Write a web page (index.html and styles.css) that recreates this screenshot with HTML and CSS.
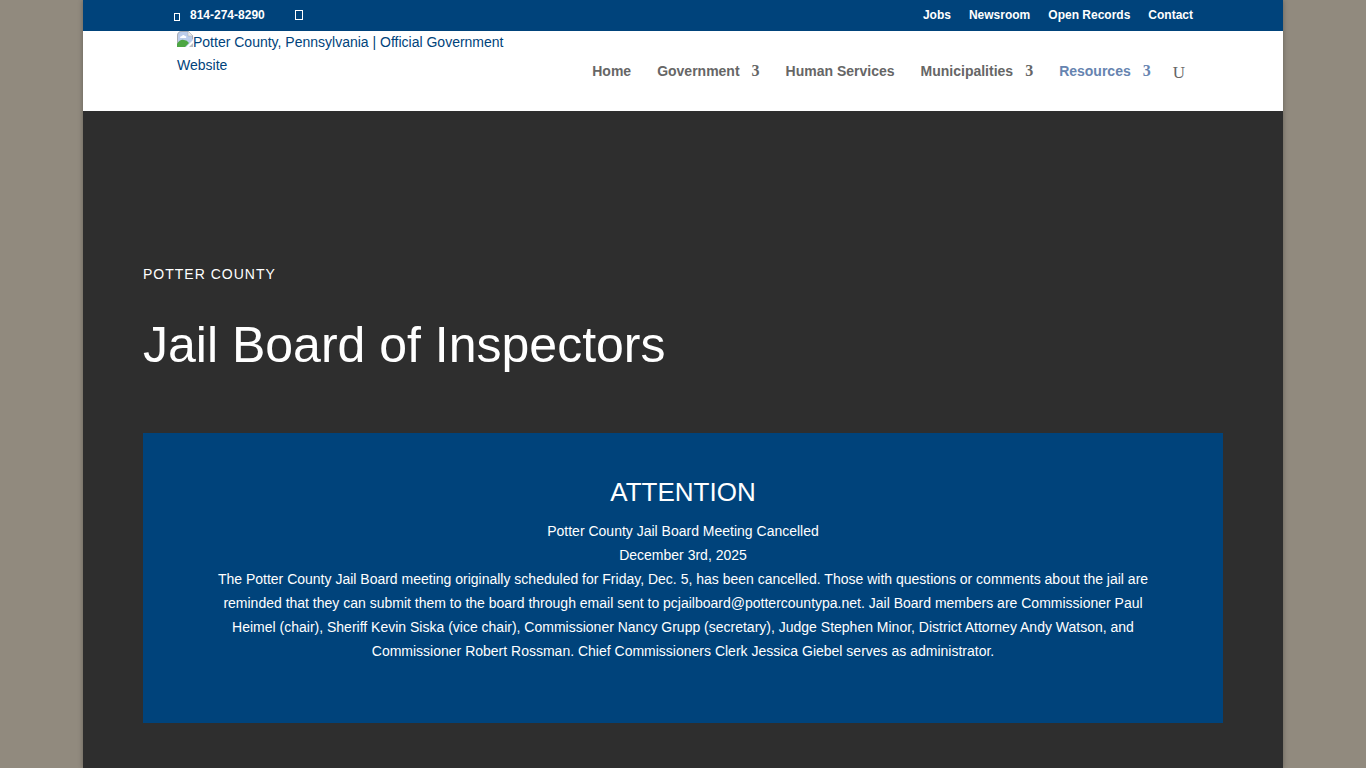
FILE: index.html
```html
<!DOCTYPE html>
<html lang="en">
<head>
    <meta charset="UTF-8">
    <meta name="viewport" content="width=device-width, initial-scale=1.0">
    <title>Jail Board of Inspectors | Potter County, Pennsylvania</title>
    <link rel="stylesheet" href="styles.css">
</head>
<body>
    <div class="page">
        <div class="top-bar">
            <div class="contact-info">
                <a href="tel:814-274-8290" class="phone">
                    <svg class="icon-phone" width="8" height="9" viewBox="0 0 8 9" aria-hidden="true"><rect x="1.5" y="1.5" width="5" height="7" fill="none" stroke="currentColor"/></svg>
                    <span>814-274-8290</span>
                </a>
                <a href="#" class="social" aria-label="Facebook">
                    <svg width="8" height="10" viewBox="0 0 8 10" aria-hidden="true"><rect x="0.5" y="0.5" width="7" height="9" fill="none" stroke="currentColor"/></svg>
                </a>
            </div>
            <nav class="top-nav" aria-label="Secondary">
                <a href="#">Jobs</a>
                <a href="#">Newsroom</a>
                <a href="#">Open Records</a>
                <a href="#">Contact</a>
            </nav>
        </div>

        <header>
            <a href="#" class="logo"><svg width="16" height="16" viewBox="0 0 16 16" aria-hidden="true">
                <path d="M5 0H11L16 5V9L9 16H0V5Q0 0 5 0Z" fill="#bccdeb"/>
                <path d="M5 0.5H11L15.500 5V8M0.500 15V5Q0.500 0.500 5 0.500" fill="none" stroke="#a9adb3"/>
                <path d="M11 0V5H16Z" fill="#ececec" stroke="#a9adb3" stroke-width="0.5"/>
                <path d="M3 7Q3 5 5 5Q6 3 8 5Q10 5 9 7Z" fill="#fff"/>
                <path d="M0 16V13Q3 8 7 9Q10 9 12 12L8 16Z" fill="#4da643"/>
                <path d="M16 12V16H12Z" fill="#b9bdc0"/>
            </svg>Potter County, Pennsylvania | Official Government Website</a>
            <nav class="main-nav" aria-label="Primary">
                <ul>
                    <li><a href="#">Home</a></li>
                    <li><a href="#">Government <span class="arrow">3</span></a></li>
                    <li><a href="#">Human Services</a></li>
                    <li><a href="#">Municipalities <span class="arrow">3</span></a></li>
                    <li><a href="#" class="current">Resources <span class="arrow">3</span></a></li>
                </ul>
                <button type="button" class="search-btn" aria-label="Search">U</button>
            </nav>
        </header>

        <main>
            <p class="eyebrow">Potter County</p>
            <h1>Jail Board of Inspectors</h1>
            <section class="notice">
                <h2>ATTENTION</h2>
                <p>Potter County Jail Board Meeting Cancelled</p>
                <p>December 3rd, 2025</p>
                <p>The Potter County Jail Board meeting originally scheduled for Friday, Dec. 5, has been cancelled. Those with questions or comments about the jail are reminded that they can submit them to the board through email sent to pcjailboard@pottercountypa.net. Jail Board members are Commissioner Paul Heimel (chair), Sheriff Kevin Siska (vice chair), Commissioner Nancy Grupp (secretary), Judge Stephen Minor, District Attorney Andy Watson, and Commissioner Robert Rossman. Chief Commissioners Clerk Jessica Giebel serves as administrator.</p>
            </section>
        </main>
    </div>
</body>
</html>
```
FILE: styles.css
```css
* {
    box-sizing: border-box;
}

body {
    margin: 0;
    font-family: "Liberation Sans", Arial, sans-serif;
    font-size: 14px;
    line-height: 24px;
    color: #666;
    background-color: #918a7e;
}

a {
    text-decoration: none;
    color: inherit;
}

.page {
    display: flex;
    flex-direction: column;
    width: 90%;
    max-width: 1200px;
    min-height: 100vh;
    margin: 0 auto;
    background-color: #2e2e2e;
    box-shadow: 0 0 5px rgba(0, 0, 0, 0.3);
}

/* Top bar */
.top-bar {
    display: flex;
    justify-content: space-between;
    align-items: center;
    padding: 3px 90px 4px;
    background-color: #00437b;
    color: #fff;
    font-size: 12px;
    font-weight: 600;
}

.contact-info,
.phone {
    display: flex;
    align-items: center;
}

.contact-info {
    gap: 30px;
}

.phone {
    gap: 9px;
}

.icon-phone {
    margin-top: 3px;
}

.social {
    display: flex;
}

.top-nav {
    display: flex;
    gap: 18px;
}

/* Header */
header {
    display: flex;
    justify-content: space-between;
    padding: 0 98px 0 94px;
    min-height: 80px;
    background-color: #fff;
}

.logo {
    width: 340px;
    line-height: 23px;
    color: #00437b;
}

.logo svg {
    vertical-align: 0;
}

.main-nav {
    display: flex;
    align-items: center;
    gap: 22px;
}

.main-nav ul {
    display: flex;
    gap: 26px;
    margin: 0;
    padding: 0;
    list-style: none;
    font-weight: 600;
}

.main-nav a {
    display: flex;
}

.main-nav a:hover {
    opacity: 0.7;
}

.main-nav .current {
    color: #6684b0;
}

.arrow {
    margin-left: 12px;
    font-family: "Liberation Serif", "Times New Roman", serif;
    font-size: 16px;
}

.search-btn {
    padding: 4px 0 0;
    border: 0;
    background: none;
    color: #666;
    font-family: "Liberation Serif", "Times New Roman", serif;
    font-size: 17px;
    cursor: pointer;
}

/* Content */
main {
    padding: 151px 5% 45px;
    color: #fff;
}

p {
    margin: 0;
}

.eyebrow {
    letter-spacing: 1px;
    text-transform: uppercase;
}

h1 {
    margin: 29px 0 58px;
    font-size: 50px;
    font-weight: 500;
    line-height: 60px;
}

.notice {
    padding: 44px 70px 60px;
    background-color: #00437b;
    text-align: center;
}

h2 {
    margin: 0 0 12px;
    font-size: 26px;
    font-weight: 500;
    line-height: 30px;
}
```
